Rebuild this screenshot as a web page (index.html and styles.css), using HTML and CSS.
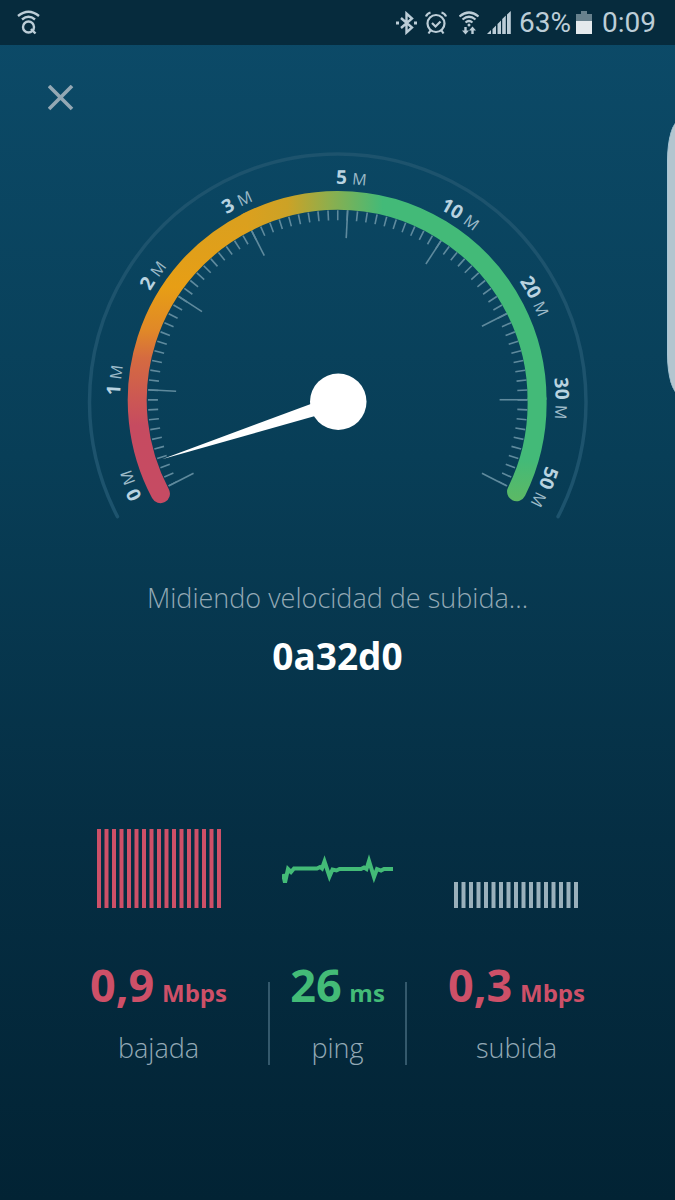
FILE: index.html
```html
<!DOCTYPE html>
<html lang="es">
<head>
<meta charset="utf-8">
<meta name="viewport" content="width=device-width, initial-scale=1">
<title>Test de velocidad</title>
<link rel="stylesheet" href="styles.css">
</head>
<body>
<header class="status">
  <svg class="status-search" width="24" height="26" viewBox="0 0 24 26" fill="none" stroke="currentColor" stroke-width="2.4">
    <path d="M1 6Q11.500-2.500 22 6M5 9.500Q11.500 4 18 9.500"/>
    <circle cx="11.500" cy="17" r="5.500"/>
    <path d="M14 19l4.500 4.500"/>
  </svg>
  <div class="status-icons">
    <svg width="22" height="24" viewBox="0 0 22 24" fill="none" stroke="currentColor" stroke-width="2.400">
      <path d="M6 7l11 9.500-5.500 5V2.500l5.500 5L6 17"/>
      <path d="M1 12h3M19 12h3" stroke-width="3"/>
    </svg>
    <svg width="22" height="24" viewBox="0 0 22 24" fill="none" stroke="currentColor" stroke-width="2.200">
      <circle cx="11" cy="12.500" r="8.500"/>
      <path d="M7 12l3.500 3.500 5-5M1 5.500Q2 2.500 5.500 1.500M16.500 1.500Q20 2.500 21 5.500M5.500 19.500l-2 3M16.500 19.500l2 3"/>
    </svg>
    <svg class="wifi" width="20" height="24" viewBox="0 0 20 24" fill="none" stroke="currentColor" stroke-width="2.200">
      <path d="M.500 5.500Q10-2.500 19.500 5.500M3.500 8.500Q10 3 16.500 8.500M6.500 11.500Q10 8.500 13.500 11.500"/>
      <circle cx="10" cy="14" r="1.500" fill="currentColor" stroke="none"/>
      <path d="M6.500 16v5M13.500 23v-5" stroke-width="2.400"/>
      <path d="M3 19.500h7l-3.500 4zM10 19.500h7l-3.500-4z" fill="currentColor" stroke="none"/>
    </svg>
    <svg class="signal" width="24" height="24" viewBox="0 0 24 24" fill="currentColor">
      <path d="M0 23l4-4v4zM5.500 18l3.500-3.500V23H5.500zM10.500 13l3.500-3.500V23h-3.500zM15.200 8l3.600-3.500V23h-3.600zM20 3.500L23.800 0v23H20z"/>
    </svg>
    <span>63%</span>
    <svg class="battery" width="16" height="24" viewBox="0 0 16 24">
      <path d="M0 3h5V0h6v3h5v8H0z" fill="#67818d"/>
      <path d="M0 10h16v13H0z" fill="#e4eaed"/>
    </svg>
    <time>0:09</time>
  </div>
</header>
<aside class="edge-handle"></aside>
<main class="screen">
  <button class="close" type="button" aria-label="Cerrar">
    <svg width="26" height="26" viewBox="0 0 26 26" fill="none" stroke="currentColor" stroke-width="3.600"><path d="M1 1l23 23M24 1l-23 23"/></svg>
  </button>
  <svg class="gauge" viewBox="-250 -250 500 370" role="img" aria-label="Velocímetro">
    <defs>
      <linearGradient id="warm" gradientUnits="userSpaceOnUse" x1="0" y1="94" x2="0" y2="-178">
        <stop offset="0" stop-color="#c64b63"/>
        <stop offset=".25" stop-color="#c64b60"/>
        <stop offset=".5" stop-color="#d56b40"/>
        <stop offset=".6" stop-color="#e08828"/>
        <stop offset=".76" stop-color="#e79e15"/>
        <stop offset="1" stop-color="#dba01e"/>
      </linearGradient>
      <linearGradient id="cool" gradientUnits="userSpaceOnUse" x1="-91" y1="0" x2="45" y2="0">
        <stop offset="0" stop-color="#dba01e"/>
        <stop offset=".3" stop-color="#cca226"/>
        <stop offset=".6" stop-color="#8fae4c"/>
        <stop offset="1" stop-color="#43ba78"/>
      </linearGradient>
      <linearGradient id="tail" gradientUnits="userSpaceOnUse" x1="0" y1="60" x2="0" y2="102">
        <stop offset="0" stop-color="#43ba78"/>
        <stop offset="1" stop-color="#5db964"/>
      </linearGradient>
      <path id="label-arc" d="M-167 142A218 218 0 1 1 167 142" pathLength="260"/>
    </defs>
    <path class="gauge-rim" d="M-220.500 117A248.500 248.500 0 1 1 220.500 117"/>
    <path class="gauge-minor" d="M-165 84A185 185 0 1 1 165 84" pathLength="234"/>
    <g class="gauge-major">
      <path d="M-190 0h28" transform="rotate(-27)"/>
      <path d="M-190 0h28" transform="rotate(3)"/>
      <path d="M-190 0h28" transform="rotate(33)"/>
      <path d="M-190 0h28" transform="rotate(63)"/>
      <path d="M-190 0h28" transform="rotate(93)"/>
      <path d="M-190 0h28" transform="rotate(123)"/>
      <path d="M-190 0h28" transform="rotate(153)"/>
      <path d="M-190 0h28" transform="rotate(180)"/>
      <path d="M-190 0h28" transform="rotate(207)"/>
    </g>
    <g class="gauge-band">
      <path d="M199.500-1A199.500 199.500 0 0 1 179 92" stroke="url(#tail)" stroke-linecap="round"/>
      <path d="M-177.500 94A199.500 199.500 0 0 1-90.600-177.800" stroke="url(#warm)" stroke-linecap="round"/>
      <path d="M-92-177.100A199.500 199.500 0 0 1 199.500 0" stroke="url(#cool)"/>
    </g>
    <g class="gauge-labels">
      <text><textPath href="#label-arc" startOffset="18">0 <tspan>M</tspan></textPath></text>
      <text><textPath href="#label-arc" startOffset="45.500">1 <tspan>M</tspan></textPath></text>
      <text><textPath href="#label-arc" startOffset="74.400">2 <tspan>M</tspan></textPath></text>
      <text><textPath href="#label-arc" startOffset="103.300">3 <tspan>M</tspan></textPath></text>
      <text><textPath href="#label-arc" startOffset="133.500">5 <tspan>M</tspan></textPath></text>
      <text><textPath href="#label-arc" startOffset="163.200">10 <tspan>M</tspan></textPath></text>
      <text><textPath href="#label-arc" startOffset="191.900">20 <tspan>M</tspan></textPath></text>
      <text><textPath href="#label-arc" startOffset="219.200">30 <tspan>M</tspan></textPath></text>
      <text><textPath href="#label-arc" startOffset="242.500">50 <tspan>M</tspan></textPath></text>
    </g>
    <g fill="#fff">
      <path d="M-176 59.500L-2-5 3 9z"/>
      <circle cx=".5" cy="2" r="28.300"/>
    </g>
  </svg>
  <p class="stage">Midiendo velocidad de subida...</p>
  <h1 class="network">0a32d0</h1>
  <div class="metrics">
    <section class="metric bad">
      <div class="chart"><svg width="125" height="80" viewBox="0 0 125 80"><path d="M1 39.500H125" stroke="currentColor" stroke-width="79" stroke-dasharray="4 3.500"/></svg></div>
      <p class="value">0,9 <small>Mbps</small></p>
      <h2 class="name">bajada</h2>
    </section>
    <div class="divider"></div>
    <section class="metric good">
      <div class="chart"><svg width="112" height="80" viewBox="0 0 112 80" fill="none" stroke="currentColor" stroke-width="4"><path d="M1 45l2 8.500L6 40l3 3 3-3.500H35l3-1.500 2 1.500 2.500-7 5 15 3-7 4 1 3-1.500H79l3-1.500 2.500 1.500 2.500-8 5 16 3-8 4 1.500 3-1.500H111"/></svg></div>
      <p class="value">26 <small>ms</small></p>
      <h2 class="name">ping</h2>
    </section>
    <div class="divider"></div>
    <section class="metric bad">
      <div class="chart muted"><svg width="125" height="27" viewBox="0 0 125 27"><path d="M0 13H125" stroke="currentColor" stroke-width="26" stroke-dasharray="4 3.500"/></svg></div>
      <p class="value">0,3 <small>Mbps</small></p>
      <h2 class="name">subida</h2>
    </section>
  </div>
</main>
</body>
</html>
```
FILE: styles.css
```css
* {
  box-sizing: border-box;
}

body {
  margin: 0;
  min-height: 100vh;
  position: relative;
  display: flex;
  flex-direction: column;
  overflow-x: hidden;
  background: linear-gradient(#0c4b69, #083e57 38%, #052e43 70%, #022334);
  color: #93a9b5;
  font-family: "Open Sans", "Noto Sans", sans-serif;
}

p, h1, h2 {
  margin: 0;
}

.status {
  display: flex;
  justify-content: space-between;
  align-items: center;
  height: 45px;
  padding: 0 19px 0 17px;
  background: #062b3d;
  color: #bccdd7;
  font: 28px/44px Roboto, sans-serif;
}

.status-icons {
  display: flex;
  align-items: center;
  gap: 8px;
}

.wifi {
  margin-left: 4px;
}

.battery {
  margin: 0 2px 0 -3px;
}

.edge-handle {
  position: absolute;
  top: 121px;
  right: -4px;
  width: 12px;
  height: 273px;
  border-left: 1px solid #a5c6d6;
  border-radius: 12px 0 0 12px / 40px 0 0 40px;
  background: #b3c5cf;
}

.screen {
  display: flex;
  flex-direction: column;
  align-items: center;
}

.close {
  align-self: flex-start;
  display: flex;
  margin: 32px 0 0 40px;
  padding: 8px;
  border: 0;
  background: none;
  color: #94a8b4;
}

.gauge {
  width: 74%;
  margin-top: 31px;
  overflow: visible;
}

.gauge-rim {
  fill: none;
  stroke: #1d536d;
  stroke-width: 3.5;
  stroke-linecap: round;
}

.gauge-minor {
  fill: none;
  stroke: #5f8a9d;
  stroke-width: 10;
  stroke-dasharray: 0.5 2.5;
  stroke-dashoffset: 0.25;
}

.gauge-major {
  stroke: #5f8a9d;
  stroke-width: 1.6;
}

.gauge-band {
  fill: none;
  stroke-width: 19;
}

.gauge-labels {
  fill: #b9d3e0;
  font-size: 19px;
  font-weight: 700;
  text-anchor: middle;
}

.gauge-labels tspan {
  font-size: 16px;
  font-weight: 400;
  fill: #9dbac8;
}

.stage {
  margin-top: 60px;
  font-size: 27px;
  line-height: 36px;
  font-weight: 330;
}

.network {
  margin-top: 16px;
  font-size: 37px;
  line-height: 48px;
  font-weight: 700;
  color: #fff;
}

.metrics {
  align-self: stretch;
  display: grid;
  grid-template-columns: 1fr 2px 135px 2px 1fr;
  margin-top: 149px;
  padding: 0 49px;
}

.metric {
  text-align: center;
}

.bad {
  color: #cd5068;
}

.good {
  color: #43bb77;
}

.chart {
  display: flex;
  justify-content: center;
  align-items: flex-end;
  height: 80px;
}

.muted {
  color: #9ab0bb;
}

.value {
  margin-top: 44px;
  font-size: 45px;
  line-height: 64px;
  font-weight: 700;
  white-space: nowrap;
}

.value small {
  margin-left: -4px;
  font-size: 24px;
}

.name {
  margin-top: 6px;
  font-size: 27px;
  line-height: 34px;
  font-weight: 330;
  color: #93a9b5;
}

.divider {
  align-self: end;
  height: 83px;
  background: #34596c;
}
```
